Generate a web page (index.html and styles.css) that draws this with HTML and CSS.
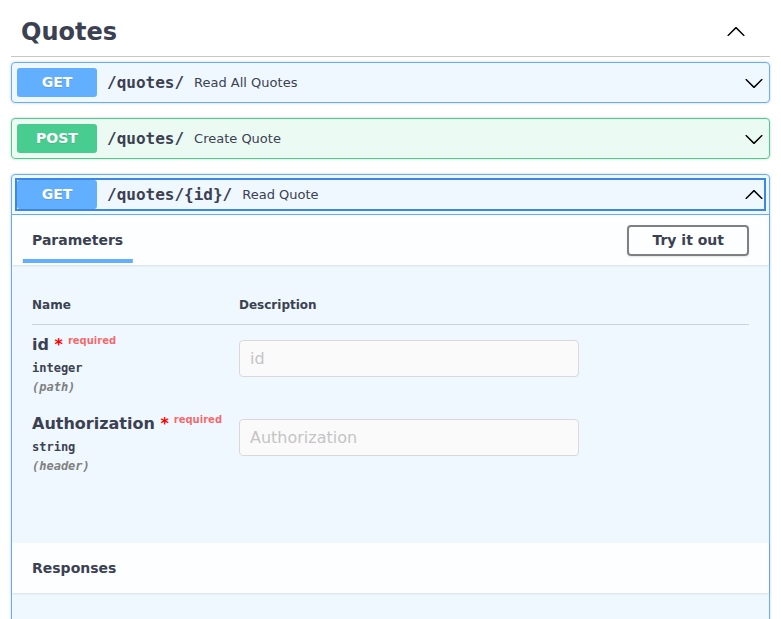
FILE: index.html
```html
<!DOCTYPE html>
<html lang="en">
<head>
<meta charset="utf-8">
<title>Quotes</title>
<link rel="stylesheet" href="styles.css">
</head>
<body>
<div class="wrapper">
  <section class="tag-section">
    <h3 class="tag">
      <span class="tag-name">Quotes</span>
      <svg class="tag-arrow" width="20" height="20" viewBox="0 0 20 20"><path d="M17.418 6.109c.272-.268.709-.268.979 0s.271.701 0 .969l-7.908 7.83c-.27.268-.707.268-.979 0l-7.908-7.830c-.27-.268-.27-.701 0-.969.271-.268.709-.268.979 0L10 13.25l7.418-7.141z" transform="rotate(180 10 10)"/></svg>
    </h3>

    <div class="opblock opblock-get">
      <div class="summary">
        <span class="method method-get">GET</span>
        <span class="path">/quotes/</span>
        <span class="desc">Read All Quotes</span>
        <svg class="arrow" width="20" height="20" viewBox="0 0 20 20"><path d="M17.418 6.109c.272-.268.709-.268.979 0s.271.701 0 .969l-7.908 7.83c-.27.268-.707.268-.979 0l-7.908-7.83c-.27-.268-.27-.701 0-.969.271-.268.709-.268.979 0L10 13.25l7.418-7.141z"/></svg>
      </div>
    </div>

    <div class="opblock opblock-post">
      <div class="summary">
        <span class="method method-post">POST</span>
        <span class="path">/quotes/</span>
        <span class="desc">Create Quote</span>
        <svg class="arrow" width="20" height="20" viewBox="0 0 20 20"><path d="M17.418 6.109c.272-.268.709-.268.979 0s.271.701 0 .969l-7.908 7.83c-.27.268-.707.268-.979 0l-7.908-7.83c-.27-.268-.27-.701 0-.969.271-.268.709-.268.979 0L10 13.25l7.418-7.141z"/></svg>
      </div>
    </div>

    <div class="opblock opblock-get is-open">
      <div class="summary summary-open">
        <div class="control">
          <span class="method method-get">GET</span>
          <span class="path">/quotes/{id}/</span>
          <span class="desc">Read Quote</span>
          <svg class="arrow" width="20" height="20" viewBox="0 0 20 20"><path d="M17.418 6.109c.272-.268.709-.268.979 0s.271.701 0 .969l-7.908 7.83c-.27.268-.707.268-.979 0l-7.908-7.83c-.27-.268-.27-.701 0-.969.271-.268.709-.268.979 0L10 13.25l7.418-7.141z" transform="rotate(180 10 10)"/></svg>
        </div>
      </div>

      <div class="section-header">
        <h4 class="tab-title"><span class="tab-active">Parameters</span></h4>
        <button class="try-out" type="button">Try it out</button>
      </div>

      <div class="params">
        <div class="param-table">
          <div class="th">Name</div>
          <div class="th">Description</div>

          <div class="td">
            <div class="param-name">id<span class="star">&nbsp;*</span><sup class="req">required</sup></div>
            <div class="param-type">integer</div>
            <div class="param-in">(path)</div>
          </div>
          <div class="td">
            <input class="param-input" type="text" placeholder="id" disabled>
          </div>

          <div class="td">
            <div class="param-name">Authorization<span class="star">&nbsp;*</span><sup class="req">required</sup></div>
            <div class="param-type">string</div>
            <div class="param-in">(header)</div>
          </div>
          <div class="td">
            <input class="param-input" type="text" placeholder="Authorization" disabled>
          </div>
        </div>
      </div>

      <div class="section-header">
        <h4 class="tab-title">Responses</h4>
      </div>
      <div class="responses-body"></div>
    </div>
  </section>
</div>
</body>
</html>
```

FILE: styles.css
```css
html, body {
  height: 100%;
  overflow: hidden;
}
body {
  margin: 0;
  background: #fff;
  font-family: "DejaVu Sans", sans-serif;
  color: #3b4151;
}
.wrapper {
  padding: 8px 11px 0;
}
.tag {
  display: flex;
  align-items: center;
  justify-content: space-between;
  margin: 0 0 5px;
  padding: 10px 24px 10px 10px;
  font-size: 24px;
  line-height: 28px;
  font-weight: bold;
  color: #3b4151;
  border-bottom: 1px solid rgba(59, 65, 81, .3);
}
.tag-arrow {
  fill: #000;
  flex: none;
}

.opblock {
  margin: 0 0 15px;
  border: 1px solid #000;
  border-radius: 4px;
  box-shadow: 0 0 3px rgba(0, 0, 0, .19);
}
.opblock-get {
  background: rgba(97, 175, 254, .1);
  border-color: #61affe;
}
.opblock-post {
  background: rgba(73, 204, 144, .1);
  border-color: #49cc90;
}
.summary {
  display: flex;
  align-items: center;
  padding: 5px;
}
.summary-open {
  border-bottom: 1px solid #61affe;
}
.control {
  flex: 1;
  display: flex;
  align-items: center;
  outline: 2px solid #3b87e3;
}
.method {
  flex: none;
  min-width: 80px;
  padding: 6px 0;
  border-radius: 3px;
  text-align: center;
  font-size: 14px;
  line-height: 17px;
  font-weight: bold;
  color: #fff;
  text-shadow: 0 1px 0 rgba(0, 0, 0, .1);
}
.method-get { background: #61affe; }
.method-post { background: #49cc90; }
.path {
  padding: 0 10px;
  font-family: "DejaVu Sans Mono", monospace;
  font-size: 16px;
  font-weight: bold;
  color: #3b4151;
}
.desc {
  flex: 1;
  font-size: 13px;
  color: #3b4151;
}
.arrow {
  flex: none;
  fill: #000;
}

.section-header {
  display: flex;
  align-items: center;
  justify-content: space-between;
  min-height: 50px;
  box-sizing: border-box;
  padding: 8px 20px;
  background: rgba(255, 255, 255, .8);
  box-shadow: 0 1px 2px rgba(0, 0, 0, .1);
  position: relative;
}
.tab-title {
  margin: 0;
  font-size: 14px;
  line-height: 17px;
  font-weight: bold;
  color: #3b4151;
}
.tab-active {
  position: relative;
}
.tab-active::after {
  content: "";
  position: absolute;
  left: 50%;
  bottom: -15px;
  width: 121%;
  height: 4px;
  transform: translateX(-50%);
  background: #61affe;
}
.try-out {
  padding: 5px 23px;
  border: 2px solid #808080;
  border-radius: 4px;
  background: transparent;
  box-shadow: 0 1px 2px rgba(0, 0, 0, .1);
  font-family: "DejaVu Sans", sans-serif;
  font-size: 14px;
  line-height: 17px;
  font-weight: bold;
  color: #3b4151;
}

.params {
  padding: 21px 20px 60px;
}
.param-table {
  display: grid;
  grid-template-columns: 207px 1fr;
}
.th {
  padding: 12px 0;
  font-size: 12px;
  line-height: 14px;
  font-weight: bold;
  color: #3b4151;
  border-bottom: 1px solid rgba(59, 65, 81, .2);
}
.td {
  padding: 10px 0;
}
.param-name {
  font-size: 16px;
  line-height: 19px;
  font-weight: bold;
  color: #3b4151;
}
.star {
  color: red;
}
.req {
  position: relative;
  top: -6px;
  padding: 5px;
  vertical-align: baseline;
  font-size: 10px;
  color: rgba(255, 0, 0, .6);
}
.param-type {
  padding: 5px 0;
  font-family: "DejaVu Sans Mono", monospace;
  font-size: 12px;
  line-height: 14px;
  font-weight: 600;
  color: #3b4151;
}
.param-in {
  font-family: "DejaVu Sans Mono", monospace;
  font-size: 12px;
  line-height: 14px;
  font-style: italic;
  font-weight: 600;
  color: gray;
}
.param-input {
  display: block;
  box-sizing: border-box;
  width: 340px;
  height: 37px;
  margin: 5px 0;
  padding: 8px 10px;
  border: 1px solid #d9d9d9;
  border-radius: 4px;
  background: #fafafa;
  font-family: "DejaVu Sans", sans-serif;
  font-size: 16px;
  line-height: 19px;
  color: #888;
}
.param-input::placeholder {
  color: #c4c4c4;
}
.responses-body {
  height: 120px;
}
```
